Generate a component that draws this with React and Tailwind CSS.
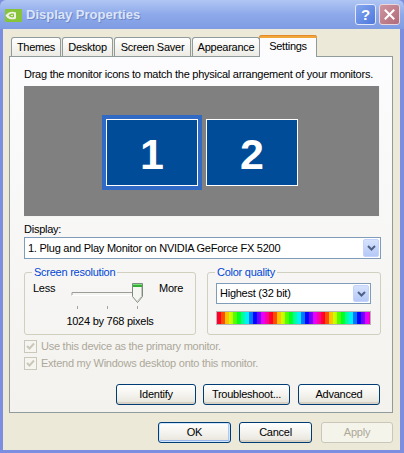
import React from 'react';

function NvIcon() {
  return (
    <svg width="17" height="13" viewBox="0 0 17 13">
      <rect x="0" y="0" width="17" height="13" fill="#88c43a" />
      <path d="M0.5 6.5 C3 2.5 7.5 1.8 11 3.5 L11 9.5 C7.5 11.2 3 10.5 0.5 6.5Z" fill="#eef2e6" />
      <path d="M3.5 6.5 C5 4.6 7.5 4.2 9 5 L9 8 C7.5 8.8 5 8.4 3.5 6.5Z" fill="#88c43a" />
      <path d="M5.5 6.5 C6.3 5.7 7.2 5.6 7.8 6 L7.8 7 C7.2 7.4 6.3 7.3 5.5 6.5Z" fill="#eef2e6" />
    </svg>
  );
}

function ComboArrow() {
  return (
    <div className="w-[16px] h-full rounded-[2px] border border-[#c3d3fd] bg-linear-to-b from-[#d6e2fd] to-[#b5c9f7] flex items-center justify-center">
      <svg width="9" height="6" viewBox="0 0 9 6">
        <path d="M1 1 L4.5 4.5 L8 1" fill="none" stroke="#4d6185" strokeWidth="2" />
      </svg>
    </div>
  );
}

function Select({ text, className }) {
  return (
    <div className={`flex items-stretch border border-[#7f9db9] bg-white p-[1px] ${className}`}>
      <div className="flex-1 flex items-center pl-[2px] whitespace-nowrap">{text}</div>
      <ComboArrow />
    </div>
  );
}

function Slider() {
  return (
    <svg width="80" height="28" viewBox="0 0 80 28">
      <rect x="4" y="10" width="68" height="4" fill="#f4f4f0" />
      <path d="M4 13.5 V10.5 H72" fill="none" stroke="#9d9c99" strokeWidth="1" />
      <path d="M4 13.5 H72 V10.5" fill="none" stroke="#ffffff" strokeWidth="1" />
      <path d="M64.5 1.5 H74.5 V14.5 L69.5 20.5 L64.5 14.5 Z" fill="#f6f6f2" stroke="#7b8b7f" strokeWidth="1" />
      <rect x="65" y="2" width="9" height="3" fill="#33b033" />
      <rect x="65" y="2" width="9" height="1" fill="#7ee07e" />
      <path d="M73.5 5 V14.3 L69.5 19" fill="none" stroke="#c9c8c0" strokeWidth="1" />
      <line x1="9.5" y1="24" x2="9.5" y2="27" stroke="#a5a59c" />
      <line x1="39.5" y1="24" x2="39.5" y2="27" stroke="#a5a59c" />
      <line x1="69.5" y1="24" x2="69.5" y2="27" stroke="#a5a59c" />
    </svg>
  );
}

function Rainbow() {
  const bands = [];
  const n = 39;
  for (let i = 0; i < n; i++) {
    const hue = ((i * 4) / 52) * 360 - 10;
    bands.push(
      <rect key={i} x={i * 4} y="0" width="4" height="12" fill={`hsl(${hue}, 100%, 50%)`} />
    );
  }
  return (
    <svg width="153" height="12" viewBox="0 0 153 12" className="block">
      {bands}
    </svg>
  );
}

function Checkbox({ label }) {
  return (
    <div className="flex items-center h-[13px] text-[#aca899]">
      <div className="w-[13px] h-[13px] border border-[#cac8bb] bg-[#f6f5f0] flex items-center justify-center">
        <svg width="9" height="9" viewBox="0 0 9 9">
          <path d="M1 4 L3.5 6.5 L8 1.5" fill="none" stroke="#cac8bb" strokeWidth="2" />
        </svg>
      </div>
      <span className="ml-[4px]">{label}</span>
    </div>
  );
}

function Button({ children, className = '', disabled = false, def = false }) {
  const base = disabled
    ? 'border-[#c9c7ba] bg-[#f5f4ea] text-[#aca899]'
    : def
    ? 'border-[#003c74] bg-linear-to-b from-[#ffffff] via-[#f4f3ee] to-[#e6e4da] shadow-[inset_0_0_0_1px_#cee7ff,inset_0_-2px_0_#9ab7e8,inset_-2px_0_0_#adc9f5]'
    : 'border-[#003c74] bg-linear-to-b from-[#ffffff] via-[#f4f3ee] to-[#e6e4da] shadow-[inset_0_-2px_0_#d6d0c5]';
  return (
    <div className={`h-[21px] rounded-[3px] border flex items-center justify-center ${base} ${className}`}>
      {children}
    </div>
  );
}

function Tab({ label, w, selected, className = '' }) {
  if (selected) {
    return (
      <div
        className={`relative z-10 h-[22px] -mb-[1px] border border-b-0 border-[#919b9c] rounded-t-[3px] bg-[#fcfcfe] flex items-start justify-center pt-[4px] ${className}`}
        style={{ width: w }}
      >
        <div className="absolute left-[-1px] right-[-1px] top-[-1px] h-[3px] rounded-t-[3px] bg-[#f1a63a] border-t border-[#e68b2c]" />
        {label}
      </div>
    );
  }
  return (
    <div
      className={`h-[19px] border border-b-0 border-[#919b9c] rounded-t-[3px] bg-linear-to-b from-[#ffffff] to-[#ecebe5] flex items-center justify-center ${className}`}
      style={{ width: w }}
    >
      {label}
    </div>
  );
}

export default function App() {
  return (
    <div className="w-[404px] h-[453px] flex flex-col bg-[#7b8ee0] font-['Liberation_Sans',Arial,sans-serif] text-[11px] leading-[13px] tracking-[-0.25px] text-black select-none overflow-hidden">
      {/* Title bar */}
      <div className="h-[29px] shrink-0 flex items-center bg-linear-to-b from-[#b0c6f3] via-[#8ea9ea] to-[#7f9ce3] rounded-t-[6px]">
        <div className="ml-[5px] mt-[1px]"><NvIcon /></div>
        <div className="ml-[4px] text-[13px] font-bold tracking-normal text-[#dbe5f8] [text-shadow:1px_1px_0_#6f87c9]">
          Display Properties
        </div>
        <div className="flex-1" />
        <div className="w-[21px] h-[21px] rounded-[3px] border border-[#e3e9f8] bg-linear-to-br from-[#86a6ee] to-[#4c77dc] flex items-center justify-center text-white font-bold text-[15px] tracking-normal">
          ?
        </div>
        <div className="ml-[3px] mr-[4px] w-[21px] h-[21px] rounded-[3px] border border-[#ead6db] bg-linear-to-br from-[#cf949f] to-[#b06b7b] flex items-center justify-center">
          <svg width="11" height="11" viewBox="0 0 11 11">
            <path d="M1.5 1.5 L9.5 9.5 M9.5 1.5 L1.5 9.5" stroke="#ffffff" strokeWidth="2" strokeLinecap="square" />
          </svg>
        </div>
      </div>

      {/* Body */}
      <div className="flex-1 ml-[3px] mr-[4px] mb-[3px] bg-[#ece9d8] flex flex-col">
        {/* Tabs */}
        <div className="h-[27px] pt-[6px] pl-[8px] flex items-end shrink-0">
          <Tab label="Themes" w={50} />
          <Tab label="Desktop" w={51} className="ml-[1px]" />
          <Tab label="Screen Saver" w={77} className="ml-[1px]" />
          <Tab label="Appearance" w={68} className="ml-[1px]" />
          <Tab label="Settings" w={58} selected className="-ml-[1px]" />
        </div>

        {/* Panel */}
        <div className="ml-[6px] w-[384px] h-[357px] border border-[#919b9c] bg-linear-to-b from-[#fcfcfe] to-[#f3f2ee] pl-[14px] flex flex-col shrink-0">
          <div className="mt-[11px] h-[13px] whitespace-nowrap">
            Drag the monitor icons to match the physical arrangement of your monitors.
          </div>

          <div className="mt-[5px] w-[356px] h-[131px] relative bg-[#808080] border-r border-b border-[#f4f4f4]">
            <div className="absolute left-[78px] top-[29px] w-[100px] h-[75px] border-[4px] border-[#316ac5]">
              <div className="w-full h-full border border-white bg-[#004c98] flex items-center justify-center pt-[4px] text-white font-bold text-[43px] leading-none tracking-normal">
                1
              </div>
            </div>
            <div className="absolute left-[182px] top-[33px] w-[92px] h-[67px] border border-white bg-[#004c98] flex items-center justify-center pt-[4px] text-white font-bold text-[43px] leading-none tracking-normal">
              2
            </div>
          </div>

          <div className="mt-[6px] h-[13px]">Display:</div>
          <Select
            className="mt-[1px] w-[357px] h-[22px]"
            text="1. Plug and Play Monitor on NVIDIA GeForce FX 5200"
          />

          <div className="mt-[7px] flex h-[69px]">
            <fieldset className="w-[172px] h-[69px] border border-[#d0d0bf] rounded-[3px] p-0 m-0 min-w-0">
              <legend className="ml-[7px] px-[2px] text-[#0046d5] leading-[13px]">Screen resolution</legend>
              <div className="mt-[3px] flex items-start">
                <div className="w-[43px] pl-[8px] h-[13px] mt-[0px]">Less</div>
                <Slider />
                <div className="ml-[11px]">More</div>
              </div>
              <div className="mt-[5px] text-center">1024 by 768 pixels</div>
            </fieldset>
            <fieldset className="ml-[11px] w-[174px] h-[69px] border border-[#d0d0bf] rounded-[3px] p-0 m-0 min-w-0">
              <legend className="ml-[7px] px-[2px] text-[#0046d5] leading-[13px]">Color quality</legend>
              <Select className="mt-[4px] ml-[8px] w-[155px] h-[21px]" text="Highest (32 bit)" />
              <div className="mt-[7px] ml-[8px] w-[155px] h-[14px] border border-[#b5b5b5]">
                <Rainbow />
              </div>
            </fieldset>
          </div>

          <div className="mt-[5px]">
            <Checkbox label="Use this device as the primary monitor." />
          </div>
          <div className="mt-[4px]">
            <Checkbox label="Extend my Windows desktop onto this monitor." />
          </div>

          <div className="mt-[14px] flex">
            <Button className="ml-[92px] w-[80px]">Identify</Button>
            <Button className="ml-[7px] w-[87px]">Troubleshoot...</Button>
            <Button className="ml-[8px] w-[82px]">Advanced</Button>
          </div>
        </div>

        {/* Bottom buttons */}
        <div className="mt-[9px] flex justify-end pr-[7px]">
          <Button def className="w-[73px]">OK</Button>
          <Button className="ml-[8px] w-[73px]">Cancel</Button>
          <Button disabled className="ml-[9px] w-[72px]">Apply</Button>
        </div>
      </div>
    </div>
  );
}
